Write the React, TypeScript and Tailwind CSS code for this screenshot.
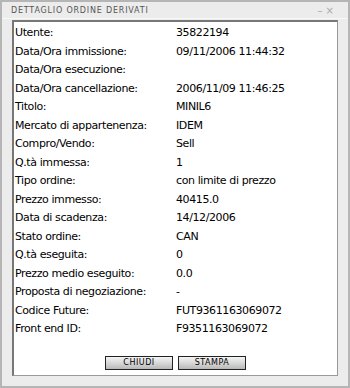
import React from "react";

const rows: [string, string][] = [
  ["Utente:", "35822194"],
  ["Data/Ora immissione:", "09/11/2006 11:44:32"],
  ["Data/Ora esecuzione:", ""],
  ["Data/Ora cancellazione:", "2006/11/09 11:46:25"],
  ["Titolo:", "MINIL6"],
  ["Mercato di appartenenza:", "IDEM"],
  ["Compro/Vendo:", "Sell"],
  ["Q.tà immessa:", "1"],
  ["Tipo ordine:", "con limite di prezzo"],
  ["Prezzo immesso:", "40415.0"],
  ["Data di scadenza:", "14/12/2006"],
  ["Stato ordine:", "CAN"],
  ["Q.tà eseguita:", "0"],
  ["Prezzo medio eseguito:", "0.0"],
  ["Proposta di negoziazione:", "-"],
  ["Codice Future:", "FUT9361163069072"],
  ["Front end ID:", "F9351163069072"],
];

const Btn = ({ label }: { label: string }) => (
  <button className="w-[68px] h-[14px] border border-[#222] bg-gradient-to-b from-[#f4f4f4] via-[#d8d8d8] to-[#b8b8b8] text-[8px] leading-[12px] tracking-[0.5px] text-black font-['DejaVu_Sans',sans-serif]">
    {label}
  </button>
);

const App = () => {
  return (
    <div className="w-[350px] h-[388px] bg-[#ececec] border-2 border-[#b5b5b5] flex flex-col font-['DejaVu_Sans',sans-serif]">
      <div className="h-[17px] flex items-center justify-between pl-[9px] pr-[14px] border-b border-[#f8f8f8]">
        <span className="text-[8px] tracking-[0.8px] text-[#555] mt-[2px]">
          DETTAGLIO ORDINE DERIVATI
        </span>
        <span className="text-[10px] text-[#aaa] leading-none mt-[2px]">– ×</span>
      </div>
      <div className="mx-[10px] mt-[1px] h-[356px] bg-white border-t-2 border-l-2 border-[#777] border-r border-b border-r-[#999] border-b-[#999] flex flex-col">
        <div className="pt-[2px] pl-[1px] flex flex-col">
          {rows.map(([k, v]) => (
            <div key={k} className="h-[18.5px] flex items-center text-[11px] tracking-[-0.4px] text-black">
              <span className="w-[161px]">{k}</span>
              <span>{v}</span>
            </div>
          ))}
        </div>
        <div className="flex justify-center gap-[5px] mt-[17px]">
          <Btn label="CHIUDI" />
          <Btn label="STAMPA" />
        </div>
      </div>
    </div>
  );
};

export default App;
